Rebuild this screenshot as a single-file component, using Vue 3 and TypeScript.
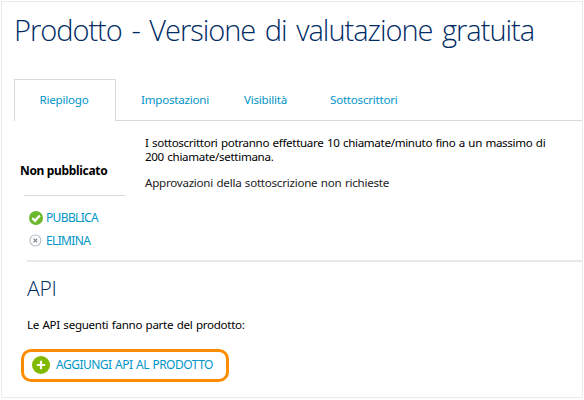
<script setup lang="ts">
interface Tab {
  id: string
  label: string
}

const tabs: Tab[] = [
  { id: 'overview', label: 'Riepilogo' },
  { id: 'settings', label: 'Impostazioni' },
  { id: 'visibility', label: 'Visibilità' },
  { id: 'subscribers', label: 'Sottoscrittori' },
]
const active = 'overview'
</script>

<template>
  <main class="frame">
    <h1 class="title"><span>Prodotto - Versione di valutazione gratuita</span></h1>

    <nav class="tabs">
      <a v-for="tab in tabs" :key="tab.id" class="tab" :class="[tab.id, { active: tab.id === active }]"><span>{{ tab.label }}</span></a>
    </nav>

    <section class="summary">
      <aside class="side">
        <div class="status"><span>Non pubblicato</span></div>
        <div class="actions">
          <a class="action publish">
            <svg width="14" height="14" viewBox="0 0 14 14">
              <circle cx="7" cy="7" r="7" fill="#6bb82f" />
              <path d="M3.3 7.2 6 9.8 10.8 4.4" fill="none" stroke="#fff" stroke-width="2.3" />
            </svg>
            <span>PUBBLICA</span>
          </a>
          <a class="action delete">
            <svg width="14" height="14" viewBox="0 0 14 14">
              <circle cx="6.4" cy="6.5" r="5.5" fill="#fff" stroke="#b4bbc3" stroke-width="1.1" />
              <path d="m4.6 4.7 3.6 3.6m0-3.6L4.6 8.3" stroke="#78838f" stroke-width="1.2" />
            </svg>
            <span>ELIMINA</span>
          </a>
        </div>
      </aside>
      <div class="details">
        <p><span>I sottoscrittori potranno effettuare 10 chiamate/minuto fino a un massimo di</span><br><span>200 chiamate/settimana.</span></p>
        <p class="approval"><span>Approvazioni della sottoscrizione non richieste</span></p>
      </div>
    </section>

    <section class="apis">
      <h2><span>API</span></h2>
      <p class="intro"><span>Le API seguenti fanno parte del prodotto:</span></p>
      <a class="add">
        <svg width="18" height="18" viewBox="0 0 18 18">
          <circle cx="9" cy="9" r="9" fill="#7fba00" />
          <path d="M9 4.8v8.4M4.8 9h8.4" stroke="#fff" stroke-width="2.2" />
        </svg>
        <span>AGGIUNGI API AL PRODOTTO</span>
      </a>
    </section>
  </main>
</template>

<style>
body {
  margin: 0;
  background: #fff;
}
</style>

<style scoped>
.frame {
  box-sizing: border-box;
  width: 582px;
  height: 397px;
  margin: 1px 0 0 1px;
  border: 1px solid #ebebeb;
  font-family: "Noto Sans", "Open Sans", sans-serif;
  font-size: 12px;
  line-height: 14px;
  letter-spacing: -0.4px;
  color: #000;
  white-space: nowrap;
}
h1, h2, p {
  margin: 0;
}
.title {
  padding: 8px 0 0 12px;
  font-family: "Open Sans", "Noto Sans", sans-serif;
  font-size: 29px;
  font-weight: 300;
  line-height: 40px;
  color: #002c66;
  letter-spacing: -1.02px;
  word-spacing: 3.1px;
}
.tabs {
  display: flex;
  height: 42px;
  margin: 29px 0 0 12px;
  box-shadow: inset 0 -1px #d9d9d9;
  font-size: 11.6px;
  letter-spacing: -0.23px;
}
.tab {
  box-sizing: border-box;
  padding-top: 13px;
  line-height: 16px;
  color: #0095c8;
}
.tab.active {
  width: 102px;
  padding: 12px 0 0 24.5px;
  border: 1px solid #d9d9d9;
  border-bottom: 0;
  background: #fff;
}
.settings {
  width: 103px;
  padding-left: 25px;
}
.visibility {
  width: 86px;
  padding-left: 25px;
}
.subscribers {
  padding-left: 25px;
}
.summary {
  display: flex;
  height: 139px;
}
.side {
  width: 143px;
}
.status {
  width: 101px;
  margin-left: 18px;
  padding-top: 42px;
  font-weight: 700;
  line-height: 16px;
  letter-spacing: -0.33px;
}
.actions {
  width: 101px;
  margin: 16px 0 0 22px;
  padding-top: 14px;
  border-top: 1px solid #dcdcdc;
}
.action {
  display: flex;
  align-items: center;
  gap: 3px;
  height: 16px;
  margin: 0 0 7px 5px;
  letter-spacing: -0.65px;
  color: #0095c8;
}
.details {
  padding-top: 15px;
  font-size: 11.6px;
  letter-spacing: -0.32px;
  word-spacing: 0.7px;
}
.approval {
  margin-top: 12px;
  color: #222;
  letter-spacing: -0.25px;
}
.apis {
  margin-left: 25px;
  padding-top: 12px;
  border-top: 2px solid #e8e8e8;
}
h2 {
  font-family: "Open Sans", "Noto Sans", sans-serif;
  font-size: 21px;
  font-weight: 300;
  line-height: 28px;
  color: #002c66;
  letter-spacing: -0.2px;
}
.intro {
  margin-top: 15px;
  font-size: 11.6px;
  line-height: 16px;
  letter-spacing: -0.29px;
  word-spacing: 0.7px;
}
.add {
  box-sizing: border-box;
  display: flex;
  align-items: center;
  gap: 6px;
  width: 208px;
  height: 33px;
  margin: 16px 0 0 -6px;
  padding: 0 0 2px 8px;
  border: 3px solid #ff8c00;
  border-radius: 10px;
  letter-spacing: -0.5px;
  word-spacing: 0.8px;
  color: #0095c8;
}
</style>
